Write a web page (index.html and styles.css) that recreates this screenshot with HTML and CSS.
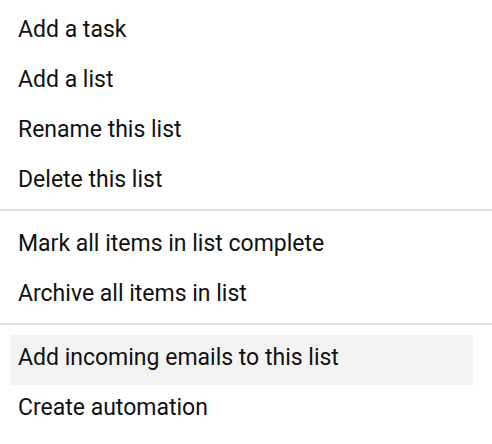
FILE: index.html
```html
<!DOCTYPE html>
<html>
<head>
<meta charset="utf-8">
<link rel="stylesheet" href="styles.css">
</head>
<body>
<div class="menu">
  <ul class="group">
    <li class="item">Add a task</li>
    <li class="item">Add a list</li>
    <li class="item">Rename this list</li>
    <li class="item">Delete this list</li>
  </ul>
  <div class="sep"></div>
  <ul class="group">
    <li class="item">Mark all items in list complete</li>
    <li class="item">Archive all items in list</li>
  </ul>
  <div class="sep"></div>
  <ul class="group">
    <li class="item hover">Add incoming emails to this list</li>
    <li class="item">Create automation</li>
  </ul>
</div>
</body>
</html>
```
FILE: styles.css
```css
html, body {
  margin: 0;
  padding: 0;
  background: #ffffff;
}
.menu {
  width: 492px;
  padding-top: 7px;
  font-family: Roboto, "Liberation Sans", sans-serif;
  font-size: 23px;
  color: #111111;
}
.group {
  list-style: none;
  margin: 0;
  padding: 0;
}
.sep + .group {
  padding-top: 10px;
}
.item {
  margin: 0 19px 0 11px;
  height: 50px;
  line-height: 46px;
  padding: 0 0 4px 7px;
  box-sizing: border-box;
}
.item.hover {
  background: #f3f3f3;
}
.sep {
  height: 2px;
  background: #e0e0e0;
  margin-top: 2px;
}
```
